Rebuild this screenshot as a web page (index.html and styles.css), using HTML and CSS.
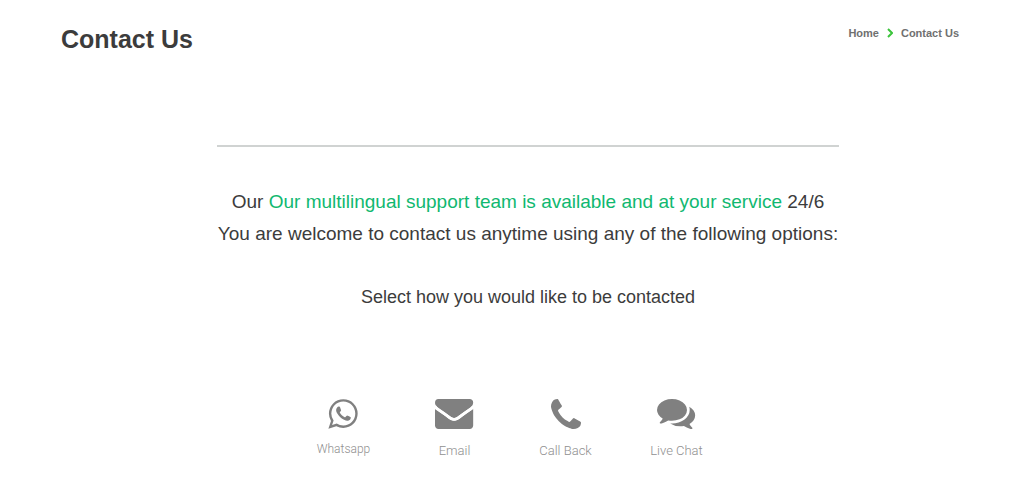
FILE: index.html
```html
<!DOCTYPE html>
<html lang="en">
<head>
    <meta charset="UTF-8">
    <meta name="viewport" content="width=device-width, initial-scale=1.0">
    <title>Contact Us</title>
    <link rel="stylesheet" href="styles.css">
</head>
<body>
    <header class="page-header">
        <h1>Contact Us</h1>
        <nav class="breadcrumb" aria-label="Breadcrumb">
            <a href="#">Home</a>
            <svg class="chevron" viewBox="0 0 6 10" aria-hidden="true"><path d="M1 1l4 4-4 4"/></svg>
            <span>Contact Us</span>
        </nav>
    </header>

    <main>
        <section class="intro">
            <hr>
            <p class="lead">
                Our <span class="highlight">Our multilingual support team is available and at your service</span> 24/6<br>
                You are welcome to contact us anytime using any of the following options:
            </p>
            <p class="select-text">Select how you would like to be contacted</p>
        </section>

        <div class="options">
            <a class="option" href="#">
                <svg class="icon" viewBox="108 112 1576 1572" aria-hidden="true"><path d="M1113 974q13 0 97.5 44t89.5 53q2 5 2 15 0 33-17 76-16 39-71 65.5t-102 26.5q-57 0-190-62-98-45-170-118t-148-185q-72-107-71-194v-8q3-91 74-158 24-22 52-22 6 0 18 1.5t19 1.5q19 0 26.5 6.5t15.5 27.5q8 20 33 88t25 75q0 21-34.5 57.5t-34.5 46.5q0 7 5 15 34 73 102 137 56 53 151 101 12 7 22 7 15 0 54-48.5t52-48.5zm-203 530q127 0 243.5-50t200.5-134 134-200.5 50-243.5-50-243.5-134-200.5-200.5-134-243.5-50-243.5 50-200.5 134-134 200.5-50 243.5q0 203 120 368l-79 233 242-77q158 104 345 104zm0-1382q153 0 292.5 60t240.5 161 161 240.5 60 292.5-60 292.5-161 240.5-240.5 161-292.5 60q-195 0-365-94l-417 134 136-405q-108-178-108-389 0-153 60-292.5t161-240.5 240.5-161 292.5-60z"/></svg>
                <span class="small-label">Whatsapp</span>
            </a>
            <a class="option" href="#">
                <svg class="icon" viewBox="0 256 1792 1408" aria-hidden="true">
                    <path d="M1792 710v794q0 66-47 113t-113 47h-1472q-66 0-113-47t-47-113v-794q44 49 101 87 362 246 497 345 57 42 92.5 65.5t94.5 48 110 24.5h2q51 0 110-24.5t94.5-48 92.5-65.5q170-123 498-345 57-39 100-87zm0-294q0 79-49 151t-122 123q-376 261-468 325-10 7-42.5 31t-54 38.5-52 32.5-57.5 27-50 9h-2q-23 0-50-9t-57.5-27-52-32.5-54-38.5-42.5-31q-91-64-262-182.5t-205-142.5q-62-42-117-115.5t-55-136.5q0-78 41.5-130t118.5-52h1472q65 0 112.5 47t47.5 113z"/>
                    <path class="fold" d="M0 610Q60 690 130 735Q500 990 650 1105Q896 1320 1142 1105Q1292 990 1662 735Q1732 690 1792 610"/>
                </svg>
                <span>Email</span>
            </a>
            <a class="option" href="#">
                <svg class="icon" viewBox="192 128 1408 1408" aria-hidden="true"><path d="M1600 1240q0 27-10 70.5t-21 68.5q-21 50-122 106-94 51-186 51-27 0-52.5-3.5t-57.5-12.5-47.5-14.5-55.5-20.5-49-18q-98-35-175-83-128-79-264.5-215.5t-215.5-264.5q-48-77-83-175-3-9-18-49t-20.5-55.5-14.5-47.5-12.5-57.5-3.5-52.5q0-92 51-186 56-101 106-122 25-11 68.5-21t70.5-10q14 0 21 3 18 6 53 76 11 19 30 54t35 63.5 31 53.5q3 4 17.5 25t21.5 35.5 7 28.5q0 20-28.5 50t-62 55-62 53-28.5 46q0 9 5 22.5t8.5 20.5 14 24 11.5 19q76 137 174 235t235 174q2 1 19 11.5t24 14 20.5 8.5 22.5 5q18 0 46-28.5t53-62 55-62 50-28.5q14 0 28.5 7t35.5 21.5 25 17.5q25 15 53.5 31t63.5 35 54 30q70 35 76 53 3 7 3 21z"/></svg>
                <span>Call Back</span>
            </a>
            <a class="option" href="#">
                <svg class="icon" viewBox="0 256 1792 1408" aria-hidden="true"><path d="M1408 768q0 139-94 257t-256.5 186.5-353.5 68.5q-86 0-176-16-124 88-278 128-36 9-86 16h-3q-11 0-20.5-8t-11.5-21q-1-3-1-6.5t.5-6.5 2-6l2.5-5 3.5-5.5 4-5 4.5-5 4-4.5q5-6 23-25t26-29.5 22.5-29 25-38.5 20.5-44q-124-72-195-177t-71-224q0-139 94-257t256.5-186.5 353.5-68.5 353.5 68.5 256.5 186.5 94 257zm384 256q0 120-71 224.5t-195 176.5q10 24 20.5 44t25 38.5 22.5 29 26 29.5 23 25q1 1 4 4.5t4.5 5 4 5 3.5 5.5l2.5 5 2 6 .5 6.5-1 6.5q-3 14-13 22t-22 7q-50-7-86-16-154-40-278-128-90 16-176 16-271 0-472-132 58 4 88 4 161 0 309-45t264-129q125-92 192-212t67-254q0-77-23-152 129 71 204 178t75 230z"/></svg>
                <span>Live Chat</span>
            </a>
        </div>
    </main>
</body>
</html>
```
FILE: styles.css
```css
* {
    box-sizing: border-box;
}
body {
    margin: 0;
    padding: 24px 57px 20px 61px;
    background: #fff;
    color: #3c3c3c;
    font-family: "Liberation Sans", Arial, sans-serif;
}
.page-header {
    display: flex;
    justify-content: space-between;
    align-items: flex-start;
}
h1 {
    margin: 0;
    font-size: 25px;
    line-height: 30px;
}
.breadcrumb {
    display: flex;
    align-items: center;
    gap: 8px;
    color: #707070;
    font-size: 11px;
    font-weight: bold;
    line-height: 18px;
}
.breadcrumb a {
    color: inherit;
    text-decoration: none;
}
.chevron {
    width: 6px;
    height: 10px;
    fill: none;
    stroke: #3cc43c;
    stroke-width: 2;
}
.intro {
    margin: 91px 0 0 36px;
    text-align: center;
}
hr {
    max-width: 622px;
    height: 2px;
    margin: 0 auto;
    border: 0;
    background: #d0d3d2;
}
.lead {
    margin: 39px 0 0;
    font-size: 19px;
    line-height: 32px;
}
.highlight {
    color: #10b870;
}
.select-text {
    margin: 35px 0 0;
    font-size: 18px;
    line-height: 24px;
}
.options {
    display: flex;
    justify-content: center;
    margin-top: 90px;
}
.option {
    display: flex;
    flex-direction: column;
    align-items: center;
    gap: 13px;
    width: 111px;
    color: #909090;
    font-family: Roboto, sans-serif;
    font-size: 13px;
    font-weight: 300;
    line-height: 18px;
    text-decoration: none;
}
.small-label {
    font-size: 12px;
    line-height: 14px;
}
.icon {
    height: 30px;
    fill: #808080;
}
.icon .fold {
    fill: none;
    stroke: #fff;
    stroke-width: 130;
}
```
